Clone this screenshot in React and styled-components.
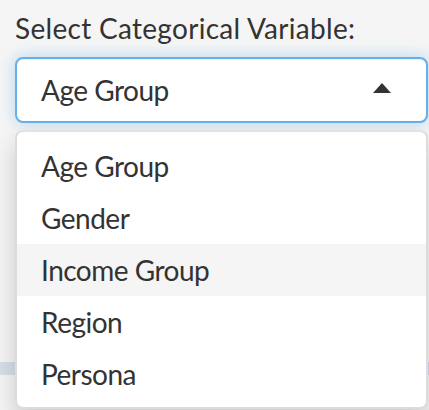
import styled, { createGlobalStyle } from 'styled-components';

const GlobalStyle = createGlobalStyle`
    html, body {
        margin: 0;
        padding: 0;
        background: #f5f5f5;
        overflow: hidden;
    }
    body {
        font-family: Lato, "Liberation Sans", sans-serif;
        color: #333333;
    }
`;

const options = ['Age Group', 'Gender', 'Income Group', 'Region', 'Persona'];

function App() {
    const selected = 'Age Group';
    const hovered = 'Income Group';

    return (
        <>
            <GlobalStyle />
            <Page>
                <Well>
                    <Field>
                        <Label>Select Categorical Variable:</Label>
                        <Control>
                            <Value>{selected}</Value>
                            <Caret />
                        </Control>
                        <Dropdown>
                            {options.map((o) => (
                                <Option key={o} $active={o === hovered}>{o}</Option>
                            ))}
                        </Dropdown>
                    </Field>
                </Well>
                <Track />
            </Page>
        </>
    );
}

export default App;

const Page = styled.div`
    position: relative;
    width: 429px;
    height: 410px;
    background: #f5f5f5;
`;

const Well = styled.div`
    padding: 8px 1px 0 15px;
`;

const Field = styled.div`
    position: relative;
    display: flex;
    flex-direction: column;
    gap: 9px;
`;

const Label = styled.label`
    font-size: 28px;
    line-height: 40px;
    font-weight: 400;
    letter-spacing: 0.3px;
    color: #333333;
`;

const Control = styled.div`
    box-sizing: border-box;
    display: flex;
    align-items: center;
    justify-content: space-between;
    height: 66px;
    padding: 0 35px 0 24px;
    background: #ffffff;
    border: 2px solid #66afe9;
    border-radius: 8px;
    box-shadow: inset 0 1px 1px rgba(0, 0, 0, 0.075), 0 0 16px rgba(102, 175, 233, 0.45);
`;

const Value = styled.span`
    font-size: 28px;
    line-height: 40px;
    letter-spacing: -0.5px;
    color: #333333;
`;

const Caret = styled.span`
    width: 0;
    height: 0;
    margin-top: -5px;
    border-left: 9.5px solid transparent;
    border-right: 9.5px solid transparent;
    border-bottom: 10px solid #333333;
`;

const Dropdown = styled.div`
    position: absolute;
    z-index: 2;
    top: 122px;
    left: 0;
    right: 0;
    box-sizing: border-box;
    padding: 8px 0 7px;
    background: #ffffff;
    border: 2px solid #dcdcdc;
    border-top-color: #e3e3e3;
    border-radius: 8px;
    box-shadow: 0 12px 24px rgba(0, 0, 0, 0.175);
`;

const Option = styled.div`
    display: flex;
    align-items: center;
    height: 52px;
    padding-left: 24px;
    font-size: 28px;
    letter-spacing: -0.5px;
    color: #333333;
    background: ${(p) => (p.$active ? '#f5f5f5' : 'transparent')};
`;

const Track = styled.div`
    position: absolute;
    left: 0;
    right: 0;
    top: 362px;
    height: 13px;
    background: #d6dee8;
`;
